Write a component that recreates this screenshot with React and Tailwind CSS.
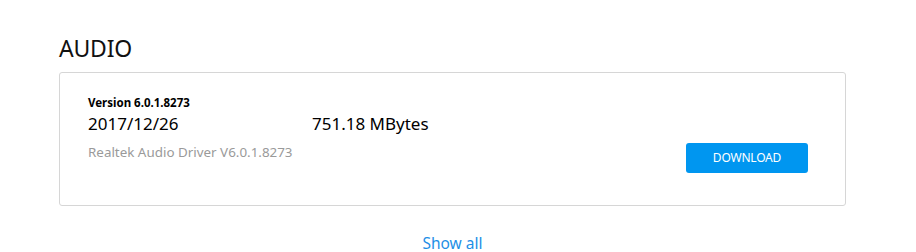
export default function App() {
  return (
    <div className="w-[916px] h-[252px] overflow-hidden bg-white font-['Noto_Sans',sans-serif]">
      <div className="pl-[59px] pr-[70px] pt-[33px]">
        <h2 className="text-[23px] leading-[30px] text-[#111] tracking-[-0.2px]">AUDIO</h2>
        <div className="mt-[9px] h-[134px] border border-[#d6d6d6] rounded-[3px] pl-[28px] pr-[37px] pt-[21px] flex items-start justify-between">
          <div className="flex flex-col">
            <p className="text-[11.5px] leading-[18px] font-bold text-black">Version 6.0.1.8273</p>
            <div className="flex text-[17px] leading-[23px] text-black">
              <span className="w-[224px]">2017/12/26</span>
              <span>751.18 MBytes</span>
            </div>
            <p className="mt-[7px] text-[13.4px] leading-[20px] text-[#9a9a9a]">Realtek Audio Driver V6.0.1.8273</p>
          </div>
          <button className="mt-[49px] w-[122px] h-[30px] rounded-[3px] bg-[#0096f0] text-white text-[12px] tracking-[-0.2px]">
            DOWNLOAD
          </button>
        </div>
        <div className="mt-[26px] flex justify-center">
          <a className="text-[15.5px] leading-[22px] text-[#1e8fe6]">Show all</a>
        </div>
      </div>
    </div>
  );
}
